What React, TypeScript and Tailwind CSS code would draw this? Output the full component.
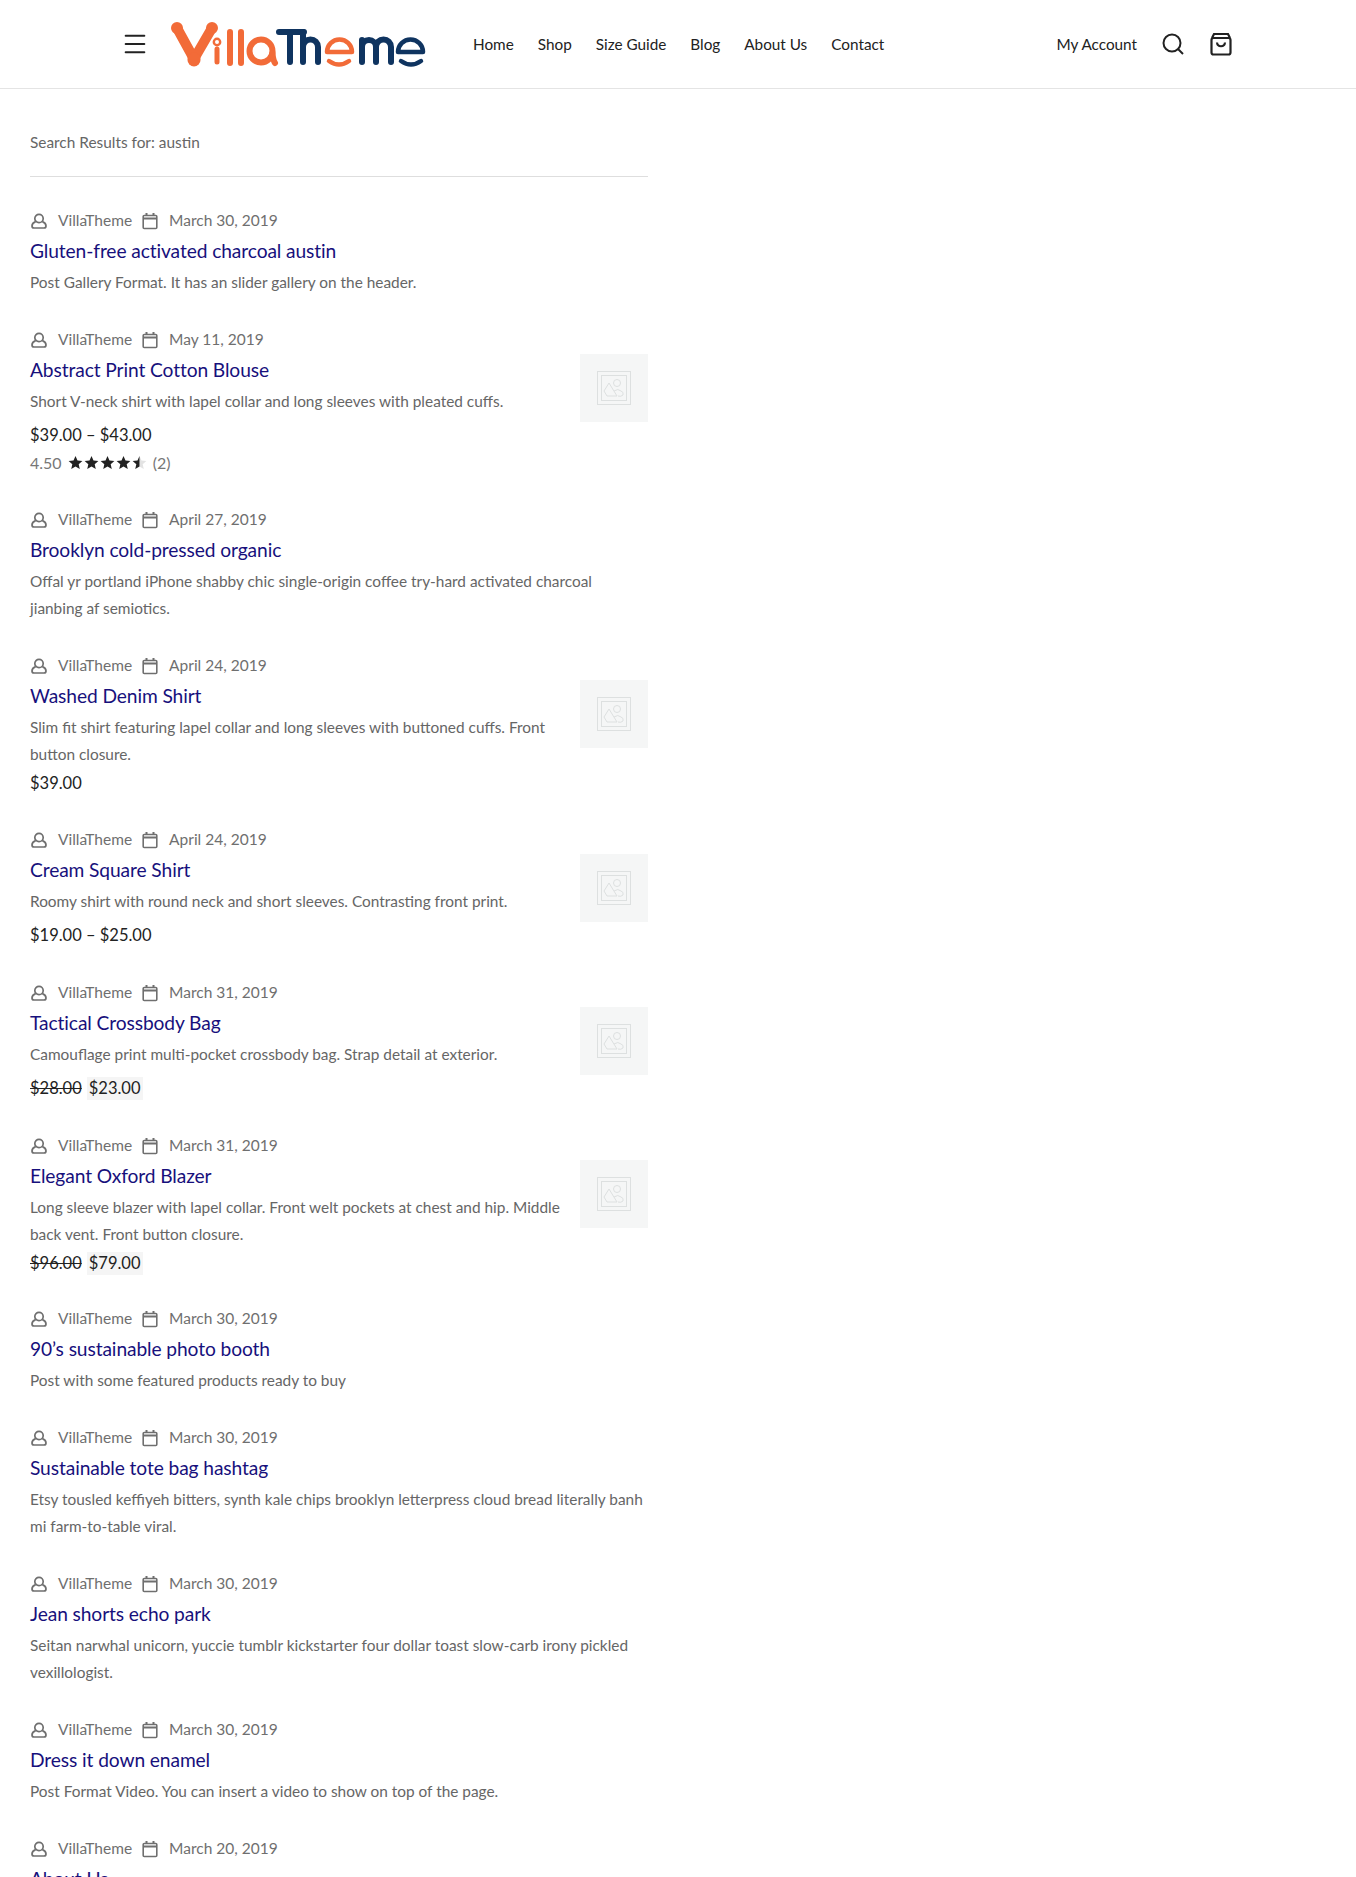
import React from 'react';
import { Menu } from 'lucide-react';

interface Post {
  date: string;
  title: string;
  excerpt: string[];
  thumb?: boolean;
  price?: string;
  oldPrice?: string;
  salePrice?: string;
  rating?: boolean;
}

const posts: Post[] = [
  { date: 'March 30, 2019', title: 'Gluten-free activated charcoal austin', excerpt: ['Post Gallery Format. It has an slider gallery on the header.'] },
  { date: 'May 11, 2019', title: 'Abstract Print Cotton Blouse', excerpt: ['Short V-neck shirt with lapel collar and long sleeves with pleated cuffs.'], thumb: true, price: '$39.00 – $43.00', rating: true },
  { date: 'April 27, 2019', title: 'Brooklyn cold-pressed organic', excerpt: ['Offal yr portland iPhone shabby chic single-origin coffee try-hard activated charcoal', 'jianbing af semiotics.'] },
  { date: 'April 24, 2019', title: 'Washed Denim Shirt', excerpt: ['Slim fit shirt featuring lapel collar and long sleeves with buttoned cuffs. Front', 'button closure.'], thumb: true, price: '$39.00' },
  { date: 'April 24, 2019', title: 'Cream Square Shirt', excerpt: ['Roomy shirt with round neck and short sleeves. Contrasting front print.'], thumb: true, price: '$19.00 – $25.00' },
  { date: 'March 31, 2019', title: 'Tactical Crossbody Bag', excerpt: ['Camouflage print multi-pocket crossbody bag. Strap detail at exterior.'], thumb: true, oldPrice: '$28.00', salePrice: '$23.00' },
  { date: 'March 31, 2019', title: 'Elegant Oxford Blazer', excerpt: ['Long sleeve blazer with lapel collar. Front welt pockets at chest and hip. Middle', 'back vent. Front button closure.'], thumb: true, oldPrice: '$96.00', salePrice: '$79.00' },
  { date: 'March 30, 2019', title: '90’s sustainable photo booth', excerpt: ['Post with some featured products ready to buy'] },
  { date: 'March 30, 2019', title: 'Sustainable tote bag hashtag', excerpt: ['Etsy tousled keffiyeh bitters, synth kale chips brooklyn letterpress cloud bread literally banh', 'mi farm-to-table viral.'] },
  { date: 'March 30, 2019', title: 'Jean shorts echo park', excerpt: ['Seitan narwhal unicorn, yuccie tumblr kickstarter four dollar toast slow-carb irony pickled', 'vexillologist.'] },
  { date: 'March 30, 2019', title: 'Dress it down enamel', excerpt: ['Post Format Video. You can insert a video to show on top of the page.'] },
  { date: 'March 20, 2019', title: 'About Us', excerpt: [] },
];

function Logo() {
  return (
    <svg width="262" height="54" viewBox="168 18 262 54" fill="none" strokeLinecap="round" strokeLinejoin="round" className="ml-[18px] shrink-0">
      <g stroke="#f26b38">
        <path d="M178 29 L195 60 L213 29" strokeWidth="10" />
        <circle cx="178" cy="29" r="3" strokeWidth="6" />
        <circle cx="213" cy="29" r="3" strokeWidth="6" />
        <path d="M195 60 V61" strokeWidth="13" />
        <circle cx="218" cy="43" r="3.2" strokeWidth="2.4" />
        <path d="M218 50 V63" strokeWidth="5" />
        <path d="M231 33 V64 M242 33 V64" strokeWidth="6" />
        <circle cx="262" cy="52" r="11.5" strokeWidth="6" />
        <path d="M273.5 54 Q274 61 276 64" strokeWidth="6" />
        <path d="M328 53 A12.5 12.5 0 0 1 353 53 H328" strokeWidth="4.5" />
        <path d="M330 62 Q340 69 350 62" strokeWidth="4.5" />
      </g>
      <g stroke="#0f3460" strokeWidth="6">
        <path d="M280 33 H305 M291 33 V63" />
        <path d="M304 33 V63 M304 48 A7.5 7.5 0 0 1 319 48 V63" />
        <path d="M363 41 V63 M363 48 A7 7 0 0 1 377 48 V63 M377 48 A7.5 7.5 0 0 1 392 48 V63" />
      </g>
      <g stroke="#0f3460" strokeWidth="4.5">
        <path d="M399 53 A12.5 12.5 0 0 1 424 53 H399" />
        <path d="M402 62 Q412 69 422 62" />
      </g>
    </svg>
  );
}

function UserIcon() {
  return (
    <svg width="18" height="18" viewBox="0 0 18 18" fill="none" stroke="#6f6f6f" strokeWidth="1.7" className="shrink-0">
      <circle cx="9" cy="6.5" r="4.2" />
      <path d="M5.6 9.6 C3.4 10.4 2 12 2 14 C2 15.4 2.8 16 4 16 H14 C15.2 16 16 15.4 16 14 C16 12 14.6 10.4 12.4 9.6" />
    </svg>
  );
}

function CalendarIcon() {
  return (
    <svg width="16" height="18" viewBox="0 0 16 18" fill="none" stroke="#6f6f6f" strokeWidth="1.6" className="shrink-0">
      <rect x="1.2" y="3.5" width="13.6" height="13" rx="1" />
      <path d="M1.2 6.5 H14.8" strokeWidth="2" />
      <path d="M4.5 1 V4 M11.5 1 V4" strokeWidth="2" />
    </svg>
  );
}

function Thumb() {
  return (
    <div className="w-[68px] h-[68px] shrink-0 bg-[#f5f6f6] flex items-center justify-center">
      <svg width="34" height="34" viewBox="0 0 34 34" fill="none" stroke="#dde0e0" strokeWidth="1">
        <rect x="0.5" y="0.5" width="33" height="33" />
        <rect x="4.5" y="4.5" width="25" height="25" />
        <circle cx="20" cy="12" r="3.5" />
        <path d="M7 20 L12 12 L20 25 H10 Z M17 20 Q21 17 24 20 Q27 21 26 24 Q24 26 21 25" />
      </svg>
    </div>
  );
}

function Stars() {
  return (
    <span className="flex items-center gap-px ml-[6px] text-[#222]">
      {[0, 1, 2, 3].map((i) => (
        <svg key={i} width="15" height="15" viewBox="0 0 24 24" fill="currentColor">
          <path d="M12 1.5l3.2 7.2 7.8.8-5.9 5.2 1.7 7.8L12 18.4l-6.8 4.1 1.7-7.8L1 9.5l7.8-.8z" />
        </svg>
      ))}
      <svg width="15" height="15" viewBox="0 0 24 24">
        <path fill="#e3e3e3" d="M12 1.5l3.2 7.2 7.8.8-5.9 5.2 1.7 7.8L12 18.4z" />
        <path fill="#222" d="M12 1.5L8.8 8.7 1 9.5l5.9 5.2-1.7 7.8L12 18.4z" />
      </svg>
    </span>
  );
}

function PostItem({ post }: { post: Post }) {
  const twoLine = post.excerpt.length > 1;
  return (
    <article className="mb-[30px]">
      <div className="flex items-center h-[27px] text-[#6f6f6f] text-[15.5px]">
        <UserIcon />
        <span className="ml-[10px]">VillaTheme</span>
        <span className="ml-[10px]"><CalendarIcon /></span>
        <span className="ml-[11px]">{post.date}</span>
      </div>
      <div className={post.thumb ? 'flex justify-between mt-[1px]' : 'mt-[1px]'}>
        <div>
          <h2 className="text-[19.2px] leading-[31px] text-[#17107c] tracking-[-0.1px] font-normal">{post.title}</h2>
          {post.excerpt.length > 0 && (
            <div className="mt-[3px] text-[#666] text-[15.4px]">
              {post.excerpt.map((line) => (
                <div key={line} className="whitespace-nowrap">{line}</div>
              ))}
            </div>
          )}
        </div>
        {post.thumb && <Thumb />}
      </div>
      {post.price && (
        <div className={twoLine ? 'text-[#222] text-[16.5px] mt-[2px] -mb-[1px]' : 'text-[#222] text-[16.5px]'}>{post.price}</div>
      )}
      {post.salePrice && (
        <div className={twoLine ? 'flex items-center h-[27px] text-[#222] text-[16.5px] mt-[2px] -mb-[2px]' : 'flex items-center h-[27px] text-[#222] text-[16.5px]'}>
          <span className="line-through">{post.oldPrice}</span>
          <span className="ml-[5px] px-[2px] bg-[#f5f5f5] leading-[23px]">{post.salePrice}</span>
        </div>
      )}
      {post.rating && (
        <div className="flex items-center text-[#777]">
          <span>4.50</span>
          <Stars />
          <span className="ml-[6px]">(2)</span>
        </div>
      )}
    </article>
  );
}

export default function App() {
  return (
    <div className="h-[1877px] overflow-hidden bg-white text-[16px] leading-[27px] font-['Lato',sans-serif]">
      <header className="h-[89px] border-b border-[#e4e4e4] flex items-center pl-[121px] pr-[124px] shrink-0">
        <Menu size={28} strokeWidth={1.7} className="text-[#222] shrink-0" />
        <Logo />
        <nav className="flex gap-[24px] ml-[44px] text-[#222] text-[15.3px]">
          <a>Home</a>
          <a>Shop</a>
          <a>Size Guide</a>
          <a>Blog</a>
          <a>About Us</a>
          <a>Contact</a>
        </nav>
        <div className="ml-auto flex items-center text-[#222] text-[15.3px]">
          <a>My Account</a>
          <svg width="22" height="22" viewBox="0 0 22 22" fill="none" stroke="#222" strokeWidth="2" className="ml-[25px]">
            <circle cx="10" cy="10" r="8.5" />
            <path d="M16 16 L21 21" />
          </svg>
          <svg width="22" height="24" viewBox="0 0 22 24" fill="none" stroke="#222" strokeWidth="2.2" className="ml-[26px]">
            <path d="M2 6 L4 2 H18 L20 6" />
            <rect x="1.5" y="6" width="19" height="16.5" rx="2" />
            <path d="M7 10.5 C7.5 15.5 14.5 15.5 15 10.5" />
          </svg>
        </div>
      </header>
      <main className="pl-[30px] w-[648px]">
        <p className="mt-[40px] text-[#666] text-[15.4px] h-[47px]">Search Results for: austin</p>
        <div className="border-t border-[#dedede] mb-[30px]" />
        {posts.map((post, i) => (
          <PostItem key={i} post={post} />
        ))}
      </main>
    </div>
  );
}
